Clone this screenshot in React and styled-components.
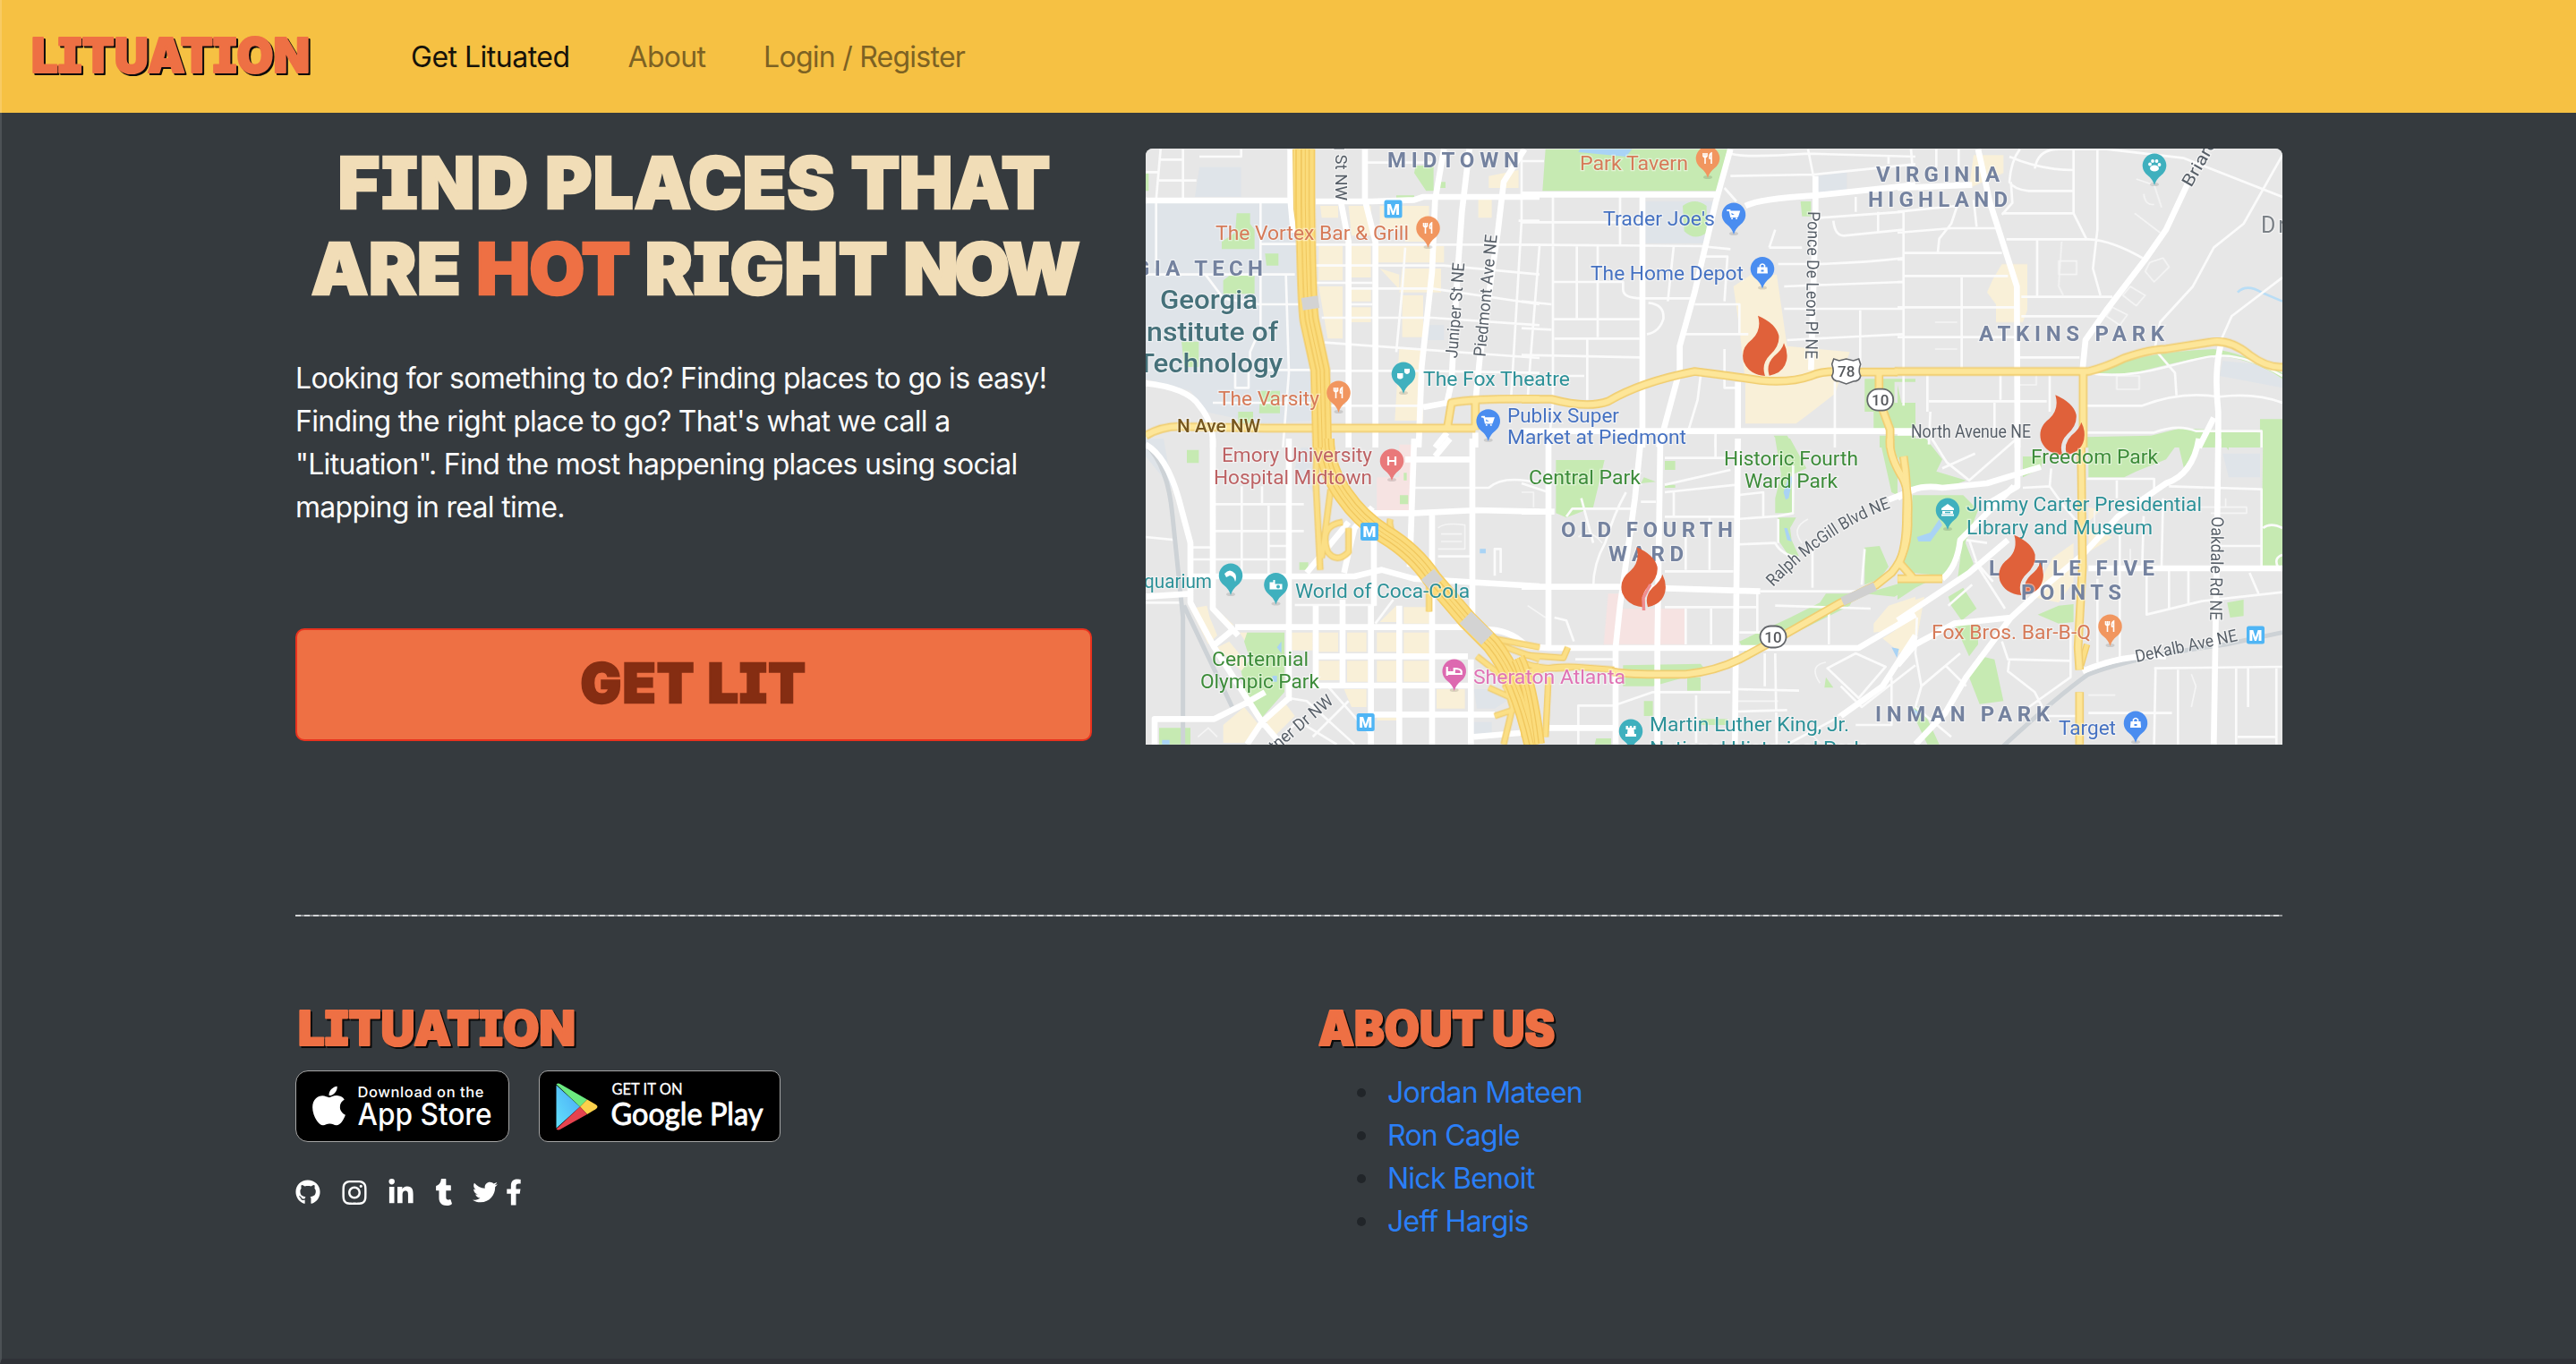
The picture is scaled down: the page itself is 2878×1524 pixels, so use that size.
import React from 'react';
import styled, { createGlobalStyle } from 'styled-components';
import { FaApple, FaGithub, FaInstagram, FaLinkedinIn, FaTumblr, FaTwitter, FaFacebookF } from 'react-icons/fa';

const GlobalStyle = createGlobalStyle`
  *, *::before, *::after { box-sizing: border-box; }
  html, body { margin: 0; padding: 0; }
  body {
    background: #353a3e;
    color: #212529;
    font-family: Inter, "Liberation Sans", sans-serif;
    font-size: 32px;
    line-height: 48px;
  }
`;

const Page = styled.div`
  min-height: 1524px;
  border-left: 2px solid #4c5155;
  border-bottom: 6px solid #2f3237;
`;

const Nav = styled.nav`
  height: 126px;
  display: flex;
  align-items: center;
  background: #f6c143;
  margin-left: -2px;
  border-left: 2px solid #f8cb63;
  padding-left: 30px;
`;

const Brand = styled.a`
  margin-bottom: 3px;
`;

const NavLinks = styled.div`
  display: flex;
  align-items: center;
  gap: 65px;
  margin-left: 110px;
  padding-top: 1px;
`;

const NavLink = styled.a`
  color: ${(p) => (p.$active ? '#16130a' : '#7d6223')};
  letter-spacing: ${(p) => (p.$active ? '-0.5px' : '-0.75px')};
  white-space: nowrap;
`;

const Container = styled.main`
  width: 2220px;
  margin-left: 328px;
`;

const Hero = styled.section`
  display: flex;
  gap: 60px;
  height: 706px;
  padding-top: 30px;
`;

const Pitch = styled.div`
  width: 890px;
  display: flex;
  flex-direction: column;
`;

const Headline = styled.h1`
  margin: 0;
  font-size: 80px;
  line-height: 96px;
  font-weight: 900;
  font-feature-settings: "cv08";
  color: #f1ddb7;
  -webkit-text-stroke: 2.5px currentColor;
  white-space: nowrap;
`;

const Line = styled.span`
  display: flex;
  justify-content: center;
  gap: 17px;
`;

const Word = styled.span`
  letter-spacing: ${(p) => p.$track || '0'};
  color: ${(p) => (p.$hot ? '#ee7044' : 'inherit')};
`;

const Lead = styled.p`
  margin: 51px 0 0;
  color: #fbfbfb;
`;

const LeadLine = styled.span`
  display: block;
  white-space: nowrap;
  letter-spacing: -0.7px;
`;

const CallToAction = styled.button`
  margin-top: 111px;
  width: 890px;
  height: 126px;
  border: 2px solid #e8321e;
  border-radius: 10px;
  background: #ee7044;
  color: #852d12;
  font: 900 60px/1 Inter, "Liberation Sans", sans-serif;
  font-feature-settings: "cv08";
  -webkit-text-stroke: 2.5px currentColor;
  letter-spacing: 1.7px;
  padding: 0 0 4px;
`;

const MapFrame = styled.div`
  width: 1270px;
  height: 666px;
  margin-top: 10px;
  border-radius: 8px 8px 0 0;
  overflow: hidden;
  background: #e7e7e7;
  svg { display: block; }
`;

const Divider = styled.hr`
  border: 0;
  height: 2px;
  margin: 190px 0 0;
  background: repeating-linear-gradient(90deg, #d2d3d5 0 6px, #8f9295 6px 10px);
`;

const Footer = styled.footer`
  display: flex;
  padding-top: 103px;
`;

const FooterColumn = styled.div`
  flex: 0 0 auto;
  width: ${(p) => p.$width};
`;

const Badges = styled.div`
  display: flex;
  gap: 33px;
  margin-top: 25px;
`;

const Badge = styled.a`
  display: flex;
  align-items: center;
  width: ${(p) => p.$width};
  height: 80px;
  border: 1.5px solid #a6a6a6;
  border-radius: ${(p) => p.$radius};
  background: #000;
  color: #fff;
`;

const Socials = styled.div`
  display: flex;
  align-items: center;
  height: 32px;
  margin-top: 40px;
  color: #fff;
`;

const Social = styled.a`
  display: flex;
  justify-content: center;
  width: ${(p) => p.$width};
  margin-right: ${(p) => p.$gap};
`;

const People = styled.ul`
  margin: 26px 0 0;
  padding-left: 80px;
  list-style: none;
`;

const Person = styled.li`
  display: flex;
  align-items: center;
  height: 48px;
  &::before {
    content: "";
    width: 10px;
    height: 10px;
    border-radius: 50%;
    background: #212529;
    margin-left: -34px;
    margin-right: 24px;
  }
`;

const PersonLink = styled.a`
  color: #2a7ff8;
  letter-spacing: -0.75px;
`;

const WordSvg = styled.svg`
  display: block;
  overflow: visible;
  text {
    font: 900 53px Inter, "Liberation Sans", sans-serif;
    font-feature-settings: "cv08";
    stroke-linejoin: round;
  }
`;

/* Orange display lettering with a hard black drop shadow */
function Wordmark({ children, width }) {
  const common = { x: 3, textLength: width, lengthAdjust: 'spacingAndGlyphs', strokeWidth: 2.2 };
  return (
    <WordSvg width={width + 6} height="44">
      <text {...common} x="5" y="43" fill="#0b0b0b" stroke="#0b0b0b">{children}</text>
      <text {...common} y="41" fill="#ee7044" stroke="#ee7044">{children}</text>
    </WordSvg>
  );
}

/* Map geometry: six tiles, each drawn in units of a third of a pixel */
const TILES = [
  {
    x: 1280, y: 160,
    campus: 'M0 200H520L510 330L520 540L560 760L570 930L380 940L200 900L150 830L0 790Z M180 80H320V180H165Z M940 610H1000V660H940Z',
    shops: 'M585 210H645V250H590Z M680 210H755V310H690Z M580 345H660V460H580Z M580 480H660V655H610Z M690 345H755V450H690Z M690 490H755V530H690Z M690 550H755V600H690Z M785 210H950V330H870V290H785Z M780 345H1000V400H780Z M785 420L850 440V490Z M860 420H990V500H850Z M860 510H930V650H860Z M850 690H930V930H835Z M1115 180H1160V250H1115Z M1150 110L1250 90V150H1150Z',
    parks: 'M305 235H350V270L365 290V355H255V330L300 300Z M400 370H445V410H405Z M285 440H365V505H260V460Z M120 665H178V750H130Z M385 830H450V905H380Z M310 900H360V940H310Z M0 100H10V160H0Z M905 75H965V160H940L900 100Z M985 130H1005V150H985Z M840 175H900V185H840Z',
    major: 'M0 192H520 M570 195H760L900 190L930 180H1320 M485 20V190L495 300 M735 20V190L770 330V1020 M655 200L680 330V1020 M1000 20L970 190L960 430L925 750L915 1020 M1085 20L1060 230L1045 440L1025 800L1010 870 M1270 20L1200 130L1180 300L1120 720L1105 870 M1010 970L970 1020 M1105 970V1020 M1010 870L930 885 M0 805Q140 820 180 880Q230 940 225 1020',
    minor: 'M0 97H45 M50 20L35 190V420 M45 55H125 M125 20V190 M45 125H170 M385 200V620L350 700V760 M0 440H500 M200 440L260 520L380 540H560 M470 440L480 770L460 1020 M385 338H520 M570 340H1320 M570 410H1000L1320 440 M570 468H760 M680 487H960L1320 540 M680 540H760 M590 585H960L1320 610 M600 668L1320 720 M620 763H940L1320 770 M385 760H570 M620 880H930 M870 350L860 490L840 700 M1260 20V260L1240 600 M1250 260H1320 M225 870H600 M740 65H960 M180 45H320V20 M300 760V820H345V730 M1240 600L1225 850',
    yellow: 'M0 980Q60 945 130 950L400 955H1105 M1010 960L1025 870Q1100 855 1320 857 M1105 960V870',
    highway: 'M535 20V200Q540 560 550 600L585 760L592 1020',
    ramp: 'M503 20L506 220L530 400 M578 1020V780',
    tunnel: 'M549 515L555 556',
  },
  {
    x: 1700, y: 160,
    campus: 'M415 195H650L620 335H415Z M985 110L1090 95V165H985Z',
    shops: 'M710 480L770 440L855 440L890 680L1100 700L1050 840L960 910L920 940H750V800L730 620Z',
    parks: 'M80 20H690L655 160H70Z M935 195H970V245H940Z M540 210Q580 180 620 210V300Q580 330 545 295Z M1150 790H1320V800H1250V870H1320V960H1180V900H1150Z M845 980H890L915 1020H870Z M1200 980H1320V1020H1200Z',
    water: 'M195 20H370L350 45L190 30Z',
    major: 'M0 172H660 M700 20L650 200L580 500L530 680V760L460 1020 M405 180V1020 M750 210Q800 185 985 175L1320 140 M985 110V250L970 760 M0 965H1320 M725 800V960',
    minor: 'M0 60H75 M105 180V870L90 1020 M0 265H405 M330 180V340 M0 340L600 345L700 355 M60 345L30 720L20 860 M185 345V590 M255 345V650 M105 465H340V490Q340 520 400 520H570 M0 530L100 540 M0 620L100 625 M105 590H400 M110 655H395 M220 655V860 M0 710L400 718 M105 780H210 M425 535Q480 540 475 590Q460 635 420 640 M510 345L490 530 M580 540H730V640 M600 380H690L680 530 M545 640H760 M680 690V820H725 M600 780L590 860L560 960 M680 150L720 195 M700 35Q750 50 960 35L1320 45 M960 20L980 120V180 M700 110L980 105L1320 70 M830 350L850 290 M830 350H940 M1230 40V70 M1120 180V230 M1000 250L1280 230 M1045 260Q1050 310 1080 310L1280 290 M1195 230V300 M860 405H1000Q1150 400 1280 385 M880 480L1280 465 M880 555H1280 M890 660L1280 640 M1135 560V760 M1050 800V1020 M650 960V1020',
    yellow: 'M0 858H100Q220 890 290 865Q400 800 580 765Q700 780 800 795Q900 805 970 780Q1010 760 1100 767H1260 M1198 767V860L1235 960V1022',
  },
  {
    x: 2120, y: 160,
    campus: 'M1090 730L1200 740L1290 790V820L1080 780Z M1120 1005H1215V1020H1120Z',
    shops: 'M255 40H355V100L240 150Z M350 405H435V560L420 600H330V540L300 500L320 455Z',
    parks: 'M0 810V950H60V880H15Z M660 770Q800 700 1060 690Q1150 700 1290 770V790Q1180 715 1050 712Q900 740 780 775Z M630 985L850 980L950 955L1215 970V925H1290V1020H630Z M0 980H60V1020H0Z',
    stream: 'M1140 500Q1170 470 1220 500L1290 530',
    major: 'M270 20L310 200L400 480L402 1020 M0 150L250 140 M975 130L900 290L830 390L700 560L630 660L620 760 M1085 670Q1060 760 1075 900V1020 M1060 920L1010 1020 M0 970H70',
    minor: 'M20 230V880 M0 230L200 210L180 270L140 320L135 365 M255 190L265 280 M0 300L180 285H340 M20 368H350 M20 445H370 M0 550H400 M0 390H20 M0 465H20 M215 450V760 M0 650H400 M100 765V900 M365 322H640Q720 325 830 390 M468 322V515 M415 515H720 M415 580H680 M410 718H610 M350 235H590L635 325 M590 20V235 M670 20V290L655 420L680 510 M410 20Q380 60 375 130Q390 155 440 160H590 M375 45Q480 90 590 90 M460 85Q470 20 540 20L700 20L960 50L1290 180 M380 130L385 200L350 240 M1290 40L1160 270L1060 350L990 480L880 600L860 700 M1290 450L1120 580L1080 670 M870 700L930 770L935 845 M630 880H820Q950 830 1075 850Q1200 835 1290 870 M640 770Q750 790 900 750T1060 715Q1150 700 1290 780 M105 865H500 M345 770V860 M630 970H860Q940 940 1000 965H1220V1020 M510 770V900 M130 20V80 M205 20V80 M45 20L50 80 M325 870V960 M110 900L105 1010 M750 270',
    lots: 'M540 395H600V440H540Z M550 330L540 480L555 510 M845 400L890 385L910 415L860 465L830 430Z M780 480L830 510L800 545L755 510Z M720 550L770 575L745 610L700 580Z M735 780H810V825H735Z M800 120L860 140L885 215 M825 170Q830 210 860 205 M795 235L880 300 M125 600H200 M125 690H200 M435 770H465V810H410',
    yellow: 'M-10 765H640Q700 750 760 720Q850 690 900 690L1060 665Q1120 660 1180 710Q1240 755 1295 750 M622 765V1020',
  },
  {
    x: 1280, y: 490,
    campus: 'M1100 840H1190L1210 880L1170 905H1110Z M0 0H60L90 170L0 60Z M520 30H560V180L500 100Z M1100 950H1160V1000H1100Z',
    shops: 'M150 570L205 560L215 600L240 660L210 690Z M235 570L295 625L270 630Z M490 650H560V710H490Z M580 650H645V715H580Z M675 650H740V715H675Z M775 650H845V715H775Z M865 650H950V720H865Z M580 745H650V810H580Z M675 745H745V815H675Z M775 745H845V815H775Z M865 745H950V815H865Z M975 840H1070V905H975Z M665 840H740V900H690Z M775 935H840V945H775Z M865 565H950V620H865Z M785 615L840 560V615Z M240 700L280 680L330 740L345 800L300 760Z M315 650H340V690Z M260 960L330 900L380 960L330 1020H260Z M400 940L470 890L500 930L430 1000Z',
    parks: 'M340 650H465V850L390 935L345 890L320 780L350 740L330 680Z M45 970H150V1025H45Z M138 38H178V82H138Z M515 415H545V440H515Z M852 190H880V220H852Z M865 115H875V140H865Z',
    hospital: 'M775 130H885V240H775Z M850 20H892V130H850Z',
    water: 'M440 700L455 680V720Z M425 795H440V815H425Z M55 1010H80V1025H55Z M1120 370H1140V385H1120Z',
    rail: 'M0 20Q75 90 90 260L125 600V1025 M128 560L290 900',
    major: 'M225 0V570L310 660 M0 20Q70 60 110 200L150 350V550L230 700L390 950L450 1020 M480 0V880 M150 462H700L790 440L900 470L1320 495 M300 632H1100 M300 635L220 700 M560 730H1080 M560 828H1080 M760 925H1170 M755 560V1025 M850 560V1025 M660 540V820 M570 560V830 M960 250V1025 M1095 0V640 M760 250H900L1110 240L1320 245 M900 0L885 430 M540 450L680 280 M665 450Q680 380 700 300L760 230 M650 120L690 200L750 250 M765 250V560 M30 1025V940H230L330 890L400 850 M340 1025L390 950L480 870 M0 530L150 520 M1090 740V1025 M870 70H1100 M1020 0L970 60 M1140 640Q1220 640 1270 690L1320 700 M1100 1000L1280 985',
    minor: 'M230 220H530 M230 310H530 M322 160V460 M390 160V220 M412 225V460 M412 360H480 M150 365H225 M150 405H480 M0 330L100 340 M500 558H770 M770 620L830 540 M980 395H1100 M900 165H1150Q1200 120 1320 150 M1170 460V370H1190V450 M0 550H120 M480 870L540 880L700 1025 M560 1000L680 880 M610 830L760 1000 M500 940L640 1025 M430 1020L520 940',
    lots: 'M980 300Q1000 280 1070 290V370H980 M990 320H1060 M990 345H1060 M175 1000L210 970L240 1000',
    highway: 'M600 0Q600 100 665 190Q720 270 800 320Q900 380 960 470L1080 610L1160 690Q1250 800 1300 1025',
    ramp: 'M575 0L570 140L585 440 M620 170L590 400 M660 280Q580 290 610 380Q640 420 680 380V300 M820 270Q810 310 860 350Q930 400 950 470V580 M1180 690L1320 740 M1110 660L1320 700 M1110 730L1200 800L1230 900L1200 1025 M1320 760L1200 840 M1150 835L1250 880 M1170 930L1260 900',
    tunnel: 'M945 455L975 490 M1072 600L1145 672',
  },
  {
    x: 1700, y: 490,
    shops: 'M1180 620L1230 560L1320 530V590L1260 640L1180 650Z M1210 670L1320 600V700L1260 710Z',
    parks: 'M115 72H278L240 230L150 265L115 250Z M480 75H515V105H480Z M410 130L450 145L400 150Z M480 155H515V165H480Z M850 0H900L955 100L910 120L915 250H850V200L870 120Z M860 265H920L900 300L905 340L930 395L900 400L860 340Z M1200 0H1260V190L1240 180Z M1150 365L1200 360L1230 430L1200 470L1150 490Z M1280 350H1320V440H1240Z M730 680L900 600L1000 550L1020 520H1120L1100 560L880 670L760 740Z M1150 520L1320 470V490L1250 530Z M340 760L600 755L620 780L440 830H340Z M555 800H600V845H555Z M410 880H440V930H410Z M250 1005H300V1025H245Z M600 940H690V960H600Z M1020 800L1045 835H1015Z',
    hospital: 'M290 520H330V690H275Z M330 570H550V690H330Z',
    water: 'M885 205L878 180L895 130L910 125L895 200Z M880 300L890 340L905 345L890 300Z M1240 700L1265 705L1258 735Z',
    major: 'M90 0V700 M0 245H110 M400 0L380 200L330 560L315 700V1025 M465 0L455 700V1025 M725 0L715 1025 M0 497H320L800 512 M100 702H1130L1320 590 M0 690Q20 700 110 702 M1320 660L1210 830L1070 930 M90 970H320 M1320 170L1230 205',
    minor: 'M150 262L170 235H370 M400 212H450 M480 155L700 105 M480 180L720 155 M510 180V260 M480 262H715 M720 190L810 180V260 M720 270L860 260L910 250V90 M480 65H715 M650 0V65 M240 500Q240 420 280 350Q310 250 350 180 M480 445H710 M110 600L150 610L175 680 M550 330V440 M630 265V440 M720 355L850 350Q870 390 930 400 M860 270V350 M480 565H790 M635 570V690 M550 570V690 M790 520V650 M730 650H800 M850 560L1170 570 M1030 570V690 M800 512H1140 M180 740H320 M190 1025V895H310L440 850H700 M585 860V1020 M720 840L930 845 M850 720L855 1025 M815 720V830 M720 915L890 910 M1025 770L1120 720L1220 765L1130 870Z M1070 830L1140 900L1320 760 M1060 930L1180 850 M1240 800V960H1120 M900 1020L1060 935 M975 350V500 M1140 490L1150 370 M0 150L90 180 M200 200L240 350',
    lots: 'M0 180H40V230 M940 350Q900 300 960 270 M20 560L80 600 M1000 820Q960 760 1020 750 M940 960L1000 1020 M190 330Q230 300 270 350 M720 880H860',
    highway: 'M-20 740Q20 820 45 1025',
    ramp: 'M0 725L140 735L155 700 M0 750Q80 780 180 765L310 775 M20 800Q60 760 180 765 M90 800L80 1000 M-10 830L10 1000',
    yellow: 'M300 780Q340 790 450 790H550Q650 780 730 740L850 675L1070 550L1190 490L1240 450Q1300 380 1295 260Q1300 160 1270 120Q1230 50 1235 0',
    tunnel2: 'M1075 546L1185 496',
  },
  {
    x: 2120, y: 490,
    campus: 'M1090 50H1215V130H1110Z',
    shops: 'M520 400L590 350V480L540 550L450 530Z M640 300L720 330L690 350L640 380Z M0 560L90 530L60 700L0 720Z M640 230L680 240L640 280Z',
    parks: 'M0 0H95L150 70L130 110L230 140L150 170L50 170L0 60Z M50 190L220 190L270 240L200 420L150 460L50 450L20 400L45 280Z M0 480H100L60 500L0 540Z M640 0H1020L960 100L940 15L900 70L800 110L760 130H640Z M1225 0H1290V430H1220Z M1080 0H1110V40Z M170 530L220 500L265 570L215 610L180 560Z M190 620H270V690L240 730Z M240 800L280 730L325 740L355 880L275 890Z M470 590L540 560L590 555V615L540 620Z M1105 550L1160 540V595L1115 600Z M60 890L100 940L140 1025H100L50 920Z M420 60L490 60L480 100L420 130Z M220 330L255 420L200 480Z',
    water: 'M65 330L110 315L140 270L150 290L110 345H70Z M45 900L75 920L60 940Z',
    rail: 'M1290 650L1100 690Q800 730 640 790Q540 860 350 1035',
    major: 'M0 200Q60 150 150 165L300 150L480 95 M402 0V160L300 220 M390 160L210 340Q200 430 150 470 M1010 0Q990 120 900 150L740 260L620 390L500 490L380 600L230 800L160 920L60 1025 M0 610L240 450L370 340 M0 760L60 690L190 620L380 600 M1075 0L1070 400L1060 1025 M640 435H1290 M620 780Q760 720 900 730',
    minor: 'M115 0L165 80L240 140L400 0 M150 100L260 50 M515 100L510 160L420 165 M510 160L560 230L620 300 M635 135H860V175 M735 140V200 M745 320V750 M825 260L820 430 M890 200L885 430 M910 160L1220 170V430 M1080 360H1220 M910 440V570 M975 440V560 M835 450V590L1020 545L1290 515 M1180 450L1210 520 M670 470V750 M860 770L1290 765 M865 770L860 1025 M940 775V1025 M1135 770V1025 M1175 770V900 M1270 770V1025 M1140 1000H1270 M640 920H920 M350 680L370 740L580 745 M375 740L370 780L460 850L510 950 M580 640V800L440 900 M65 600L60 720L80 830L60 900L180 1000 M80 830L210 720 M160 760L230 830 M240 340L270 430L360 570 M230 340L300 350 M260 410L320 480 M250 490L170 560 M500 930H600 M1290 300Q1250 280 1225 300 M1290 390Q1260 400 1275 430',
    lots: 'M950 230H1170V250H1050 M1100 200V230 M985 790L1000 830L985 900 M640 860H730 M660 240V300 M780 370V430',
    yellow: 'M615 0L620 430L605 700L610 775 M610 850V1025 M20 60Q35 150 30 260Q30 370 0 430 M0 470H150 M10 420L50 465',
    ramp: 'M635 690L615 760',
  },
];

const layer = (key, attrs) =>
  TILES.map((t) =>
    t[key] ? (
      <g key={key + t.x + t.y} transform={`translate(${t.x} ${t.y}) scale(0.3333)`}>
        <path d={t[key]} {...attrs} />
      </g>
    ) : null
  );

const line = (stroke, strokeWidth, extra) => ({ fill: 'none', stroke, strokeWidth, strokeLinejoin: 'round', ...extra });

const C = {
  area: '#74829f', food: '#d67a58', shop: '#4672c2', teal: '#2c9198', park: '#3d8c3a',
  med: '#bd6264', road: '#575f68', school: '#46717a', pink: '#e072b5', avenue: '#76571f',
};

/* text, x start, x end, baseline, colour, size, weight */
const LABELS = [
  ['MIDTOWN', 1550, 1697, 187, C.area, 24, 700, 1],
  ['The Vortex Bar & Grill', 1358, 1574, 268, C.food, 22.5],
  ['GIA TECH', 1268, 1411, 307.5, C.area, 24, 700, 1],
  ['Georgia', 1296, 1405, 345, C.school, 30, 500],
  ['Institute of', 1272, 1428, 380.5, C.school, 30, 500],
  ['Technology', 1271, 1433, 416, C.school, 30, 500],
  ['The Varsity', 1361, 1474, 453, C.food, 22.5],
  ['N Ave NW', 1315, 1408, 483, C.avenue, 21, 500],
  ['The Fox Theatre', 1590, 1754, 431, C.teal, 22.5],
  ['Publix Super', 1684, 1809, 471.7, C.shop, 22.5],
  ['Market at Piedmont', 1684, 1884, 496, C.shop, 22.5],
  ['Park Tavern', 1765, 1886, 190, C.food, 22.5],
  ["Trader Joe's", 1791, 1916, 252, C.shop, 22.5],
  ['The Home Depot', 1777, 1948, 313, C.shop, 22.5],
  ['VIRGINIA', 2096, 2234, 203, C.area, 24, 700, 1],
  ['HIGHLAND', 2087, 2243, 231, C.area, 24, 700, 1],
  ['Druid', 2526, 2596, 260, '#7b8187', 25, 400, 1],
  ['ATKINS PARK', 2211, 2418, 381, C.area, 24, 700, 1],
  ['North Avenue NE', 2135, 2269, 489, C.road, 20],
  ['Emory University', 1365, 1533, 515.7, C.med, 22.5],
  ['Hospital Midtown', 1356, 1533, 540.7, C.med, 22.5],
  ['quarium', 1278, 1354, 656.7, C.teal, 22.5],
  ['World of Coca-Cola', 1447, 1642, 667.7, C.teal, 22.5],
  ['Centennial', 1354, 1462, 744, C.park, 22.5],
  ['Olympic Park', 1341, 1474, 769, C.park, 22.5],
  ['Sheraton Atlanta', 1646, 1816, 764, C.pink, 22.5],
  ['Central Park', 1708, 1833, 540.7, C.park, 22.5],
  ['Historic Fourth', 1926, 2076, 519.5, C.park, 22.5],
  ['Ward Park', 1949, 2053, 545, C.park, 22.5],
  ['OLD FOURTH', 1744, 1936, 599.5, C.area, 24, 700, 1],
  ['WARD', 1797, 1881, 626.7, C.area, 24, 700, 1],
  ['Martin Luther King, Jr.', 1843, 2066, 817, C.teal, 22.5],
  ['National Historical Park', 1843, 2083, 843.5, C.teal, 22.5],
  ['Jimmy Carter Presidential', 2197, 2460, 571, C.teal, 22.5],
  ['Library and Museum', 2197, 2405, 597, C.teal, 22.5],
  ['LITTLE FIVE', 2222, 2407, 643, C.area, 24, 700, 1],
  ['Fox Bros. Bar-B-Q', 2158, 2336, 714, C.food, 22.5],
  ['INMAN PARK', 2095, 2290, 805.7, C.area, 24, 700, 1],
  ['Target', 2300, 2364, 821, C.shop, 22.5],
];

const LABELS_ABOVE = [
  ['Freedom Park', 2269, 2411, 518, C.park, 22.5],
  ['POINTS', 2258, 2370, 670, C.area, 24, 700, 1],
];

/* text, start point, length, angle */
const STREETS = [
  ['ng St NW', 1492, 147, 77, 90],
  ['Juniper St NE', 1628, 400.5, 107, -85.5],
  ['Piedmont Ave NE', 1659.5, 399, 137, -84.5],
  ['Ponce De Leon Pl NE', 2020, 236, 165, 91],
  ['Briarcliff', 2448, 210, 84, -60],
  ['Oakdale Rd NE', 2471, 577, 116, 91],
  ['DeKalb Ave NE', 2387, 740, 116, -12],
  ['tner Dr NW', 1424, 841, 87, -40],
];

function Labels({ items }) {
  return items.map(([t, x1, x2, y, fill, size, weight = 400, spaced]) => (
    <text
      key={t} x={x1} y={y} fill={fill} fontSize={size} fontWeight={weight}
      textLength={x2 - x1} lengthAdjust={spaced ? 'spacing' : 'spacingAndGlyphs'}
      stroke="#ffffff" strokeOpacity="0.45" strokeWidth="2.5" paintOrder="stroke"
    >
      {t}
    </text>
  ));
}

const GLYPHS = {
  food: <path d="M-5 -6V-2M-3 -6V-2M-1 -6V-2M-5 -2.5Q-3 0 -1 -2.5M-3 -1V6M4 6V-6Q1.500 -5 2 0H4" fill="none" stroke="#fff" strokeWidth="1.6" />,
  cart: <path d="M-7 -5H-4.500L-3 2H4M-3.800 -3.500H6L4.500 1H-3ZM-2 4.200H-1.800M3 4.200H3.200" fill="#fff" stroke="#fff" strokeWidth="1.8" strokeLinecap="round" />,
  bag: <g><path d="M-5.500 -2H5.500L6 5H-6Z" fill="#fff" /><path d="M-2.500 -1V-4Q0 -7 2.500 -4V-1" fill="none" stroke="#fff" strokeWidth="1.6" /><path d="M-1.500 1H1.500V3H-1.500Z" fill="#4a8df0" /></g>,
  masks: <g fill="#fff"><path d="M-7 -1H-0.500V4Q-4 7 -7 4Z" /><path d="M1 -6H7V-2Q4 2 1 -2Z" /></g>,
  paw: <g fill="#fff"><ellipse cx="0" cy="3" rx="5" ry="3.600" /><circle cx="-5" cy="-1.500" r="1.900" /><circle cx="-2" cy="-5" r="1.900" /><circle cx="2.500" cy="-5" r="1.900" /><circle cx="5.500" cy="-1" r="1.900" /></g>,
  hospital: <path d="M-4 -5V5M4 -5V5M-4 0H4" stroke="#fff" strokeWidth="2.2" fill="none" />,
  dolphin: <path d="M-7 -2Q-1 -9 5 -2Q7 2 5 7Q4 1 -1 0L-5 2Z" fill="#fff" />,
  camera: <g><path d="M-7 -3H-3V-5.500H-1V-1H7V5H-7Z" fill="#fff" /><circle cx="2.500" cy="2" r="2" fill="#3fb0be" /></g>,
  bed: <path d="M-8 -5V5M-8 3H8V0Q7 -3 0 -3V1H-7M-4 -1.500H-3.800" fill="none" stroke="#fff" strokeWidth="2.200" />,
  rook: <path d="M-5.500 -6H-3V-4H-1.200V-6H1.200V-4H3V-6H5.500V-2H3.500L4 3H6V6H-6V3H-4L-3.500 -2H-5.500Z" fill="#fff" />,
  museum: <g><path d="M0 -7L7 -2V0H-7V-2ZM-6 1H6V4H-6ZM-7 4.500H7V6.500H-7Z" fill="#fff" /><path d="M-3 2.500H3" stroke="#3fb0be" strokeWidth="1.500" /></g>,
};

const PINS = [
  [1595.5, 255, '#f1965f', 'food'], [1495.5, 439, '#f1965f', 'food'], [1908, 177, '#f1965f', 'food'], [2357.5, 700, '#f1965f', 'food'],
  [1568, 418, '#3fb0be', 'masks'], [1662.7, 470.7, '#4a8df0', 'cart'], [1937, 240, '#4a8df0', 'cart'], [1969, 300.5, '#4a8df0', 'bag'],
  [2386, 808, '#4a8df0', 'bag'], [2407, 185, '#3fb0be', 'paw'], [1555, 515, '#e9797a', 'hospital'], [1375, 643, '#3fb0be', 'dolphin'],
  [1425.5, 653.5, '#3fb0be', 'camera'], [1624.7, 750, '#dd69b0', 'bed'], [1822, 817, '#3fb0be', 'rook'], [2176, 570, '#3fb0be', 'museum'],
];

const STATIONS = [[1556.5, 233.5], [1530, 594], [1525.7, 807], [2520, 709.5]];
const FIRES = [[1946.7, 352], [1811, 610.5], [2233, 597], [2279, 440.5]];

function Fire({ x, y }) {
  return (
    <g transform={`translate(${x} ${y}) scale(0.3333)`} fill="#e0613a">
      <path d="M52 2Q112 28 122 68Q126 104 92 134Q62 164 76 204Q22 200 4 156Q-8 112 32 82Q66 50 52 2Z" />
      <path d="M139 94Q154 124 148 152Q138 194 90 203Q78 166 106 138Q134 116 139 94Z" />
    </g>
  );
}

function Shield({ x, y, n, us }) {
  return (
    <g transform={`translate(${x} ${y})`}>
      {us ? (
        <path d="M-14 -14L-8 -12L0 -14L8 -12L14 -14L16 -8Q13 0 16 5Q15 11 8 11L0 14L-8 11Q-15 11 -16 5Q-13 0 -16 -8Z" fill="#fff" stroke="#63666a" strokeWidth="1.6" />
      ) : (
        <rect x="-14.500" y="-12" width="29" height="24" rx="12" fill="#fff" stroke="#63666a" strokeWidth="1.8" />
      )}
      <text textAnchor="middle" y="6" fontSize="17" fontWeight="500" fill="#55585c">{n}</text>
    </g>
  );
}

const MapSvg = styled.svg`
  font-family: Roboto, "Liberation Sans", sans-serif;
`;

const Terrain = styled.g`
  filter: blur(0.7px);
`;

function HeatMap() {
  return (
    <MapSvg width="1270" height="666" viewBox="1280 166 1270 666">
      <rect x="1280" y="166" width="1270" height="666" fill="#e7e7e7" />
      <Terrain>
        {layer('campus', { fill: '#dfe4e9' })}
        {layer('shops', { fill: '#f9f0d8' })}
        {layer('hospital', { fill: '#f6e3e2' })}
        {layer('parks', { fill: '#c6eab2' })}
        {layer('water', { fill: '#a9d3f5' })}
        {layer('stream', line('#b9ddf5', 8))}
        {layer('lots', line('#f5f5f5', 5))}
        {layer('minor', line('#fbfbfb', 8))}
        {layer('rail', line('#cdd2d6', 15))}
        {layer('major', line('#ffffff', 20))}
        {layer('ramp', line('#f0cc6c', 22))}
        {layer('ramp', line('#fbdf86', 14))}
        {layer('yellow', line('#f0cd70', 29))}
        {layer('yellow', line('#fde699', 19))}
        {layer('highway', line('#f4cc63', 66))}
        {layer('highway', line('#fbdc7c', 56))}
        {layer('highway', line('#f0c75e', 30))}
        {layer('highway', line('#fbdc7c', 22))}
        {layer('highway', line('#f0c75e', 3))}
        {layer('tunnel', line('#d3d3d3', 56))}
        {layer('tunnel2', line('#d0d0d0', 30))}
      </Terrain>
      <Labels items={LABELS} />
      {STREETS.map(([t, x, y, len, a]) => (
        <text key={t} transform={`translate(${x} ${y}) rotate(${a})`} fontSize="19" fill={C.road} textLength={len} lengthAdjust="spacingAndGlyphs" stroke="#fff" strokeOpacity="0.5" strokeWidth="2.500" paintOrder="stroke">{t}</text>
      ))}
      <path id="mcgill" d="M1981 656Q2045 590 2114 567" fill="none" />
      <text fontSize="19" fill={C.road} stroke="#fff" strokeOpacity="0.5" strokeWidth="2.500" paintOrder="stroke">
        <textPath href="#mcgill" textLength="160" lengthAdjust="spacingAndGlyphs">Ralph McGill Blvd NE</textPath>
      </text>
      {PINS.map(([x, y, fill, g]) => (
        <g key={x + g} transform={`translate(${x} ${y})`}>
          <ellipse cx="0" cy="21" rx="5" ry="2" fill="#000" opacity="0.12" />
          <path d="M0 22Q-2 15 -8 10.500A13.300 13.300 0 1 1 8 10.500Q2 15 0 22Z" fill={fill} />
          {GLYPHS[g]}
        </g>
      ))}
      {STATIONS.map(([x, y]) => (
        <g key={x} transform={`translate(${x} ${y})`}>
          <rect x="-10" y="-10" width="20" height="20" rx="2.500" fill="#4fb5f5" />
          <text textAnchor="middle" y="6" fontSize="17" fontWeight="900" fill="#fff">M</text>
        </g>
      ))}
      <Shield x={2062.7} y={415} n="78" us />
      <Shield x={2100.7} y={446.7} n="10" />
      <Shield x={1981} y={711.5} n="10" />
      {FIRES.map(([x, y]) => <Fire key={x} x={x} y={y} />)}
      <path d="M1844 653L1839 662L1836 668L1836.500 682" fill="none" stroke="#ee8d90" strokeWidth="3.500" />
      <Labels items={LABELS_ABOVE} />
    </MapSvg>
  );
}

const BadgeSvg = styled.svg`
  display: block;
  text { fill: #fff; }
`;

function AppStore() {
  return (
    <Badge $width="239px" $radius="14px">
      <BadgeSvg width="236" height="77" viewBox="331.500 1197.500 236 77">
        <FaApple x="343" y="1210" size={50} color="#fff" />
        <text x="400" y="1225" fontFamily="Inter, sans-serif" fontSize="16.500" fontWeight="500" textLength="141">Download on the</text>
        <text x="400" y="1256.500" fontFamily="Inter, sans-serif" fontSize="34" fontWeight="500" textLength="150" lengthAdjust="spacingAndGlyphs">App Store</text>
      </BadgeSvg>
    </Badge>
  );
}

function GooglePlay() {
  return (
    <Badge $width="270px" $radius="10px">
      <BadgeSvg width="267" height="77" viewBox="603.500 1197.500 267 77">
        <defs>
          <linearGradient id="playBlue" x1="1" y1="0" x2="0" y2="1">
            <stop offset="0" stopColor="#4aa9f7" /><stop offset="1" stopColor="#62e0fb" />
          </linearGradient>
        </defs>
        <path d="M622 1212V1260L648.500 1236Z" fill="url(#playBlue)" />
        <path d="M622 1211Q624 1209 627 1211L656.500 1228L648.500 1236Z" fill="#6cea80" />
        <path d="M656.500 1228L666 1233.500Q670 1236 666 1238.800L656.500 1244.500L648.500 1236Z" fill="#fbd04b" />
        <path d="M622 1261Q624 1263 627 1261L656.500 1244.500L648.500 1236Z" fill="#e5434f" />
        <text x="684" y="1222" fontFamily="Lato, sans-serif" fontSize="17.500" textLength="79" lengthAdjust="spacingAndGlyphs" stroke="#fff" strokeWidth="0.3">GET IT ON</text>
        <text x="683" y="1256" fontFamily="Lato, sans-serif" fontSize="34" textLength="170" lengthAdjust="spacingAndGlyphs" stroke="#fff" strokeWidth="0.9">Google Play</text>
      </BadgeSvg>
    </Badge>
  );
}

export default function App() {
  return (
    <>
      <GlobalStyle />
      <Page>
        <Nav>
          <Brand>
            <Wordmark width={311}>LITUATION</Wordmark>
          </Brand>
          <NavLinks>
            <NavLink $active>Get Lituated</NavLink>
            <NavLink>About</NavLink>
            <NavLink>Login / Register</NavLink>
          </NavLinks>
        </Nav>
        <Container>
          <Hero>
            <Pitch>
              <Headline>
                <Line>
                  <Word $track="2px">FIND</Word>
                  <Word $track="0.8px">PLACES</Word>
                  <Word $track="-1px">THAT</Word>
                </Line>
                <Line>
                  <Word $track="0.5px">ARE</Word>
                  <Word $track="-1px" $hot>HOT</Word>
                  <Word $track="0.5px">RIGHT</Word>
                  <Word $track="-4.5px">NOW</Word>
                </Line>
              </Headline>
              <Lead>
                <LeadLine>Looking for something to do? Finding places to go is easy!</LeadLine>
                <LeadLine>Finding the right place to go? That's what we call a</LeadLine>
                <LeadLine>"Lituation". Find the most happening places using social</LeadLine>
                <LeadLine>mapping in real time.</LeadLine>
              </Lead>
              <CallToAction>GET LIT</CallToAction>
            </Pitch>
            <MapFrame>
              <HeatMap />
            </MapFrame>
          </Hero>
          <Divider />
          <Footer>
            <FooterColumn $width="1140px">
              <Wordmark width={310}>LITUATION</Wordmark>
              <Badges>
                <AppStore />
                <GooglePlay />
              </Badges>
              <Socials>
                <Social $width="28px" $gap="24px"><FaGithub size={28} /></Social>
                <Social $width="28px" $gap="24px"><FaInstagram size={31} /></Social>
                <Social $width="28px" $gap="24px"><FaLinkedinIn size={31} /></Social>
                <Social $width="20px" $gap="22px"><FaTumblr size={30} /></Social>
                <Social $width="28px" $gap="9px"><FaTwitter size={28} /></Social>
                <Social $width="18px" $gap="0"><FaFacebookF size={30} /></Social>
              </Socials>
            </FooterColumn>
            <FooterColumn $width="1080px">
              <Wordmark width={264}>ABOUT US</Wordmark>
              <People>
                <Person><PersonLink>Jordan Mateen</PersonLink></Person>
                <Person><PersonLink>Ron Cagle</PersonLink></Person>
                <Person><PersonLink>Nick Benoit</PersonLink></Person>
                <Person><PersonLink>Jeff Hargis</PersonLink></Person>
              </People>
            </FooterColumn>
          </Footer>
        </Container>
      </Page>
    </>
  );
}
